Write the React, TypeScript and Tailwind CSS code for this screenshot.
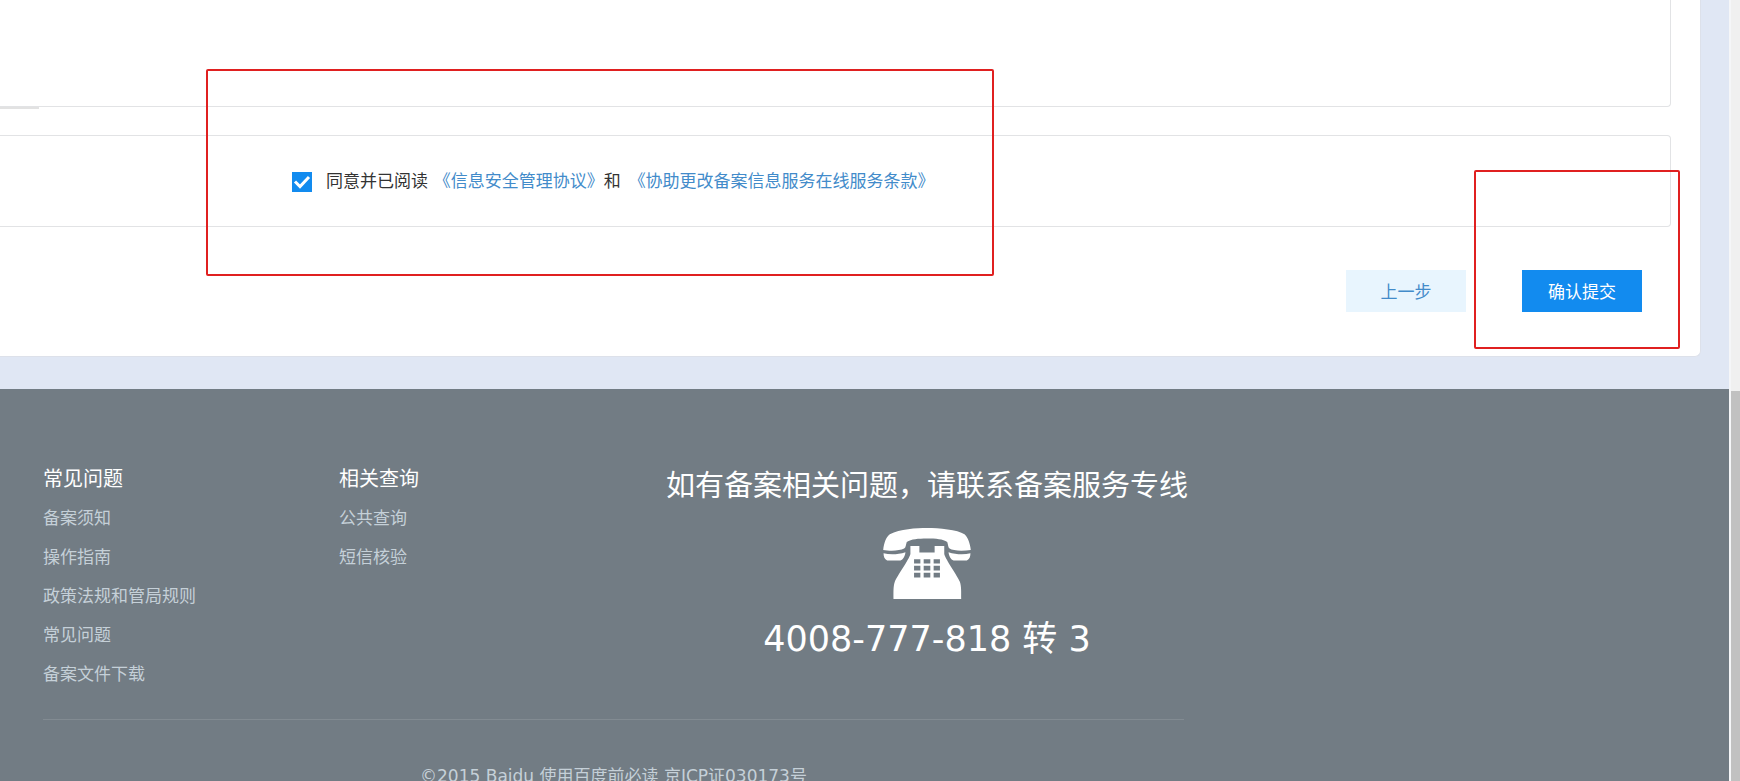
import React, { useState } from "react";

type LinkGroup = {
  title: string;
  links: string[];
};

const linkGroups: LinkGroup[] = [
  {
    title: "常见问题",
    links: [
      "备案须知",
      "操作指南",
      "政策法规和管局规则",
      "常见问题",
      "备案文件下载",
    ],
  },
  {
    title: "相关查询",
    links: ["公共查询", "短信核验"],
  },
];

const PhoneIcon = () => (
  <svg
    viewBox="0 0 264 214"
    className="h-[71px] w-[88px]"
    fill="white"
    aria-hidden="true"
  >
    {/* handset */}
    <path d="M0 66C2 48 8 27 20 19C50 3 100 0 132 0C168 0 224 5 245 19C255 27 262 48 264 66C240 70 210 69 200 62C195 58 196 50 193 42C180 34 160 32 132 32C105 32 85 34 71 42C68 50 69 58 63 62C50 69 20 70 0 66Z" />
    <path d="M1 76C20 81 45 80 67 73C66 85 60 95 52 98H12C4 94 1 86 1 76Z" />
    <path d="M263 76C244 81 219 80 197 73C198 85 204 95 212 98H252C260 94 263 86 263 76Z" />
    {/* body with the keypad cut out */}
    <path
      fillRule="evenodd"
      d="M82 54V78C78 95 42 143 35 162C30 175 31 195 31 214H235C235 195 236 175 231 162C224 143 188 95 184 78V54H155V74H109V54Z
      M93 94h19v13h-19z M122 94h20v13h-20z M152 94h19v13h-19z
      M93 114h19v14h-19z M122 114h20v14h-20z M152 114h19v14h-19z
      M93 135h19v14h-19z M122 135h20v14h-20z M152 135h19v14h-19z"
    />
  </svg>
);

const AgreementForm = () => {
  const [agreed, setAgreed] = useState(true);

  return (
    <main className="relative mr-7 rounded-br-md border-r border-b border-[#dde1ea] bg-white pb-11">
      <section className="mr-[29px] h-[107px] rounded-br border-r border-b border-[#e2e3e5]" />
      <div className="h-7">
        <div className="h-0.5 w-[39px] bg-[#e2e2e2]" />
      </div>
      <section className="mr-[29px] flex h-[92px] items-start rounded-r border-y border-r border-[#e2e3e5] pt-8 pl-[292px] text-[17px] leading-6 text-[#333]">
        <span className="relative mt-1 mr-3.5 h-5 w-5">
          <input
            id="agree"
            type="checkbox"
            checked={agreed}
            onChange={(e) => setAgreed(e.target.checked)}
            className="peer block h-5 w-5 appearance-none border border-[#128bef] bg-white checked:bg-[#128bef]"
          />
          <svg
            viewBox="0 0 20 20"
            className="pointer-events-none absolute inset-0 hidden h-5 w-5 peer-checked:block"
            fill="none"
            stroke="white"
            strokeWidth="3"
          >
            <path d="M3 9.500l5 5L17 5" />
          </svg>
        </span>
        <p>
          <label htmlFor="agree">同意并已阅读</label>{" "}
          <a href="#" className="ml-0.5 text-[#428bca]">
            《信息安全管理协议》
          </a>
          和{" "}
          <a href="#" className="ml-1 text-[#428bca]">
            《协助更改备案信息服务在线服务条款》
          </a>
        </p>
      </section>
      <div className="mt-[43px] mr-[58px] flex justify-end gap-14 text-[17px] leading-6">
        <button
          type="button"
          className="h-[42px] w-[120px] bg-[#e8f5fe] text-[#428bca]"
        >
          上一步
        </button>
        <button
          type="button"
          className="h-[42px] w-[120px] bg-[#128bef] text-white"
        >
          确认提交
        </button>
      </div>
      <div className="pointer-events-none absolute top-[69px] left-[206px] h-[207px] w-[788px] rounded-xs border-2 border-[#e02020]" />
      <div className="pointer-events-none absolute top-[170px] right-5 h-[179px] w-[206px] rounded-xs border-2 border-[#e02020]" />
    </main>
  );
};

const Footer = () => (
  <footer className="flex-1 bg-[#727c84] pt-[69px] pl-[43px]">
    <div className="max-w-[1141px]">
      <div className="flex h-[261px] items-start">
        {linkGroups.map((group) => (
          <div key={group.title} className="w-[296px]">
            <h3 className="text-xl leading-[39px] text-white">{group.title}</h3>
            <ul className="text-[17px] leading-[39px] text-[#c5d0d8]">
              {group.links.map((link) => (
                <li key={link}>
                  <a href="#">{link}</a>
                </li>
              ))}
            </ul>
          </div>
        ))}
        <div className="ml-auto flex w-[514px] flex-col items-center pt-1 text-white">
          <p className="text-[29px] leading-[42px] whitespace-nowrap">
            如有备案相关问题，请联系备案服务专线
          </p>
          <div className="mt-6 mb-4">
            <PhoneIcon />
          </div>
          <p className="font-['DejaVu_Sans','Noto_Sans_CJK_SC',sans-serif] text-[35px] leading-[48px] whitespace-nowrap">
            4008-777-818 转 3
          </p>
        </div>
      </div>
      <p className="border-t border-[#828b92] pt-11 text-center font-['DejaVu_Sans','Noto_Sans_CJK_SC',sans-serif] text-[17px] leading-6 text-[#c5d0d8]">
        ©2015 Baidu <a href="#">使用百度前必读</a> 京ICP证030173号
      </p>
    </div>
  </footer>
);

const App: React.FC = () => {
  return (
    <div className="flex h-screen overflow-hidden bg-[#f5f6f8] font-['Noto_Sans_CJK_SC',sans-serif]">
      <div className="flex min-w-0 flex-1 flex-col bg-[#e0e7f4]">
        <AgreementForm />
        <div className="h-8 shrink-0" />
        <Footer />
      </div>
      {/* scroll bar */}
      <div className="ml-0.5 flex w-[9px] flex-col justify-end bg-[#f0f0f0]">
        <div className="h-1/2 bg-[#c1c1c1]" />
      </div>
    </div>
  );
};

export default App;
